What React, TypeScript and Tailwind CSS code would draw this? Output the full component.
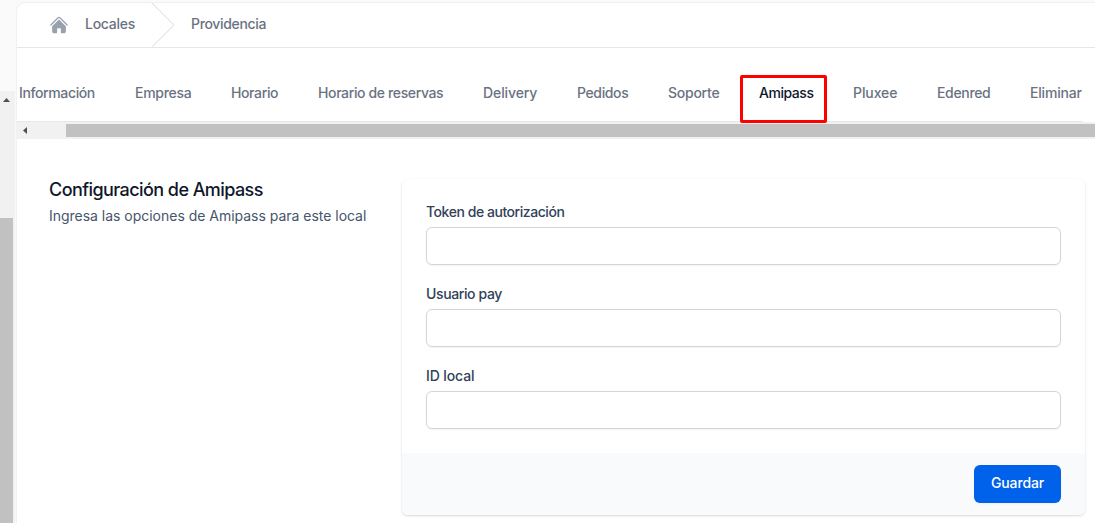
import { HTMLAttributes } from "react";

const tabs = [
  { label: "Información", box: "w-[76px] tracking-[-0.38px]" },
  { label: "Empresa", box: "w-[56px] tracking-[-0.3px]" },
  { label: "Horario", box: "w-[47px] tracking-[-0.38px]" },
  { label: "Horario de reservas", box: "w-[125px] tracking-[-0.37px]" },
  { label: "Delivery", box: "w-[54px] tracking-[-0.1px]" },
  { label: "Pedidos", box: "w-[51px] tracking-[-0.38px]" },
  { label: "Soporte", box: "w-[51px] tracking-[-0.25px]" },
  { label: "Amipass", box: "w-[54px] tracking-[-0.46px]", active: true },
  { label: "Pluxee", box: "w-[44px] tracking-[-0.1px]" },
  { label: "Edenred", box: "w-[53px] tracking-[-0.34px]" },
  { label: "Eliminar", box: "w-[51px] tracking-[-0.2px]" },
];

const fields = [
  { id: "token", label: "Token de autorización", tracking: "tracking-[-0.45px]" },
  { id: "user", label: "Usuario pay", tracking: "tracking-[-0.38px]" },
  { id: "local", label: "ID local", tracking: "tracking-[-0.12px]" },
];

function HomeIcon(props: HTMLAttributes<unknown>) {
  return (
    <svg className={props.className} viewBox="0 0 24 24" fill="currentColor" aria-hidden="true">
      <path d="M11.47 3.84a.75.75 0 011.06 0l8.69 8.69a.75.75 0 101.06-1.06l-8.689-8.69a2.25 2.25 0 00-3.182 0l-8.69 8.69a.75.75 0 001.061 1.06l8.69-8.69z" />
      <path d="M12 5.432l8.159 8.159c.03.03.06.058.091.086v6.198c0 1.035-.84 1.875-1.875 1.875H15a.75.75 0 01-.75-.75v-4.5a.75.75 0 00-.75-.75h-3a.75.75 0 00-.75.75V21a.75.75 0 01-.75.75H5.625a1.875 1.875 0 01-1.875-1.875v-6.198a2.29 2.29 0 00.091-.086L12 5.43z" />
    </svg>
  );
}

function Sidebar() {
  return (
    <div className="flex w-[17px] shrink-0 flex-col bg-[#fafafa] pt-[91px]">
      <div className="flex w-[15px] grow flex-col bg-[#f1f1f1]">
        <svg className="mt-[7px] ml-[3px] h-1 w-[7px]" viewBox="0 0 7 4" fill="#505050">
          <path d="M3.5 0L7 4H0z" />
        </svg>
        <div className="mt-[116px] w-[13px] grow bg-[#c1c1c1]" />
      </div>
    </div>
  );
}

export default function App() {
  return (
    <div className="flex h-[523px] w-full overflow-hidden bg-[#fafafa] font-['Inter',sans-serif] text-sm">
      <Sidebar />
      <main className="mt-[3px] flex min-w-0 grow flex-col rounded-tl-lg bg-white shadow-[0_0_2px_rgba(0,0,0,0.14)]">
        <nav className="flex h-[45px] shrink-0 items-center border-b border-gray-200 pl-8 font-medium text-gray-500">
          <HomeIcon className="size-5 shrink-0 text-gray-400" />
          <span className="ml-4 w-[66px] pb-0.5 tracking-[-0.25px]">Locales</span>
          <svg className="h-[44px] w-6 shrink-0" viewBox="0 0 24 44" fill="none" stroke="#e5e7eb">
            <path d="M1 0L23 22L1 44" strokeWidth="1.2" />
          </svg>
          <span className="ml-4 pb-0.5 tracking-[-0.34px]">Providencia</span>
        </nav>

        <div className="mt-[18px] flex h-[56px] w-[1066px] shrink-0 items-center gap-10 border-b border-gray-200 pb-0.5 pl-0.5 font-medium text-gray-500">
          {tabs.map((tab) => (
            <a
              key={tab.label}
              className={`relative shrink-0 whitespace-nowrap ${tab.box} ${tab.active ? "text-slate-900" : ""}`}
            >
              {tab.label}
              {tab.active && (
                <span className="absolute -top-2 -left-[19px] z-10 h-[48px] w-[87px] rounded-xs border-3 border-[#ff0000]" />
              )}
            </a>
          ))}
        </div>

        <div className="flex h-[17px] shrink-0 items-center bg-[#f1f1f1] pl-1.5">
          <svg className="h-[7px] w-1" viewBox="0 0 4 7" fill="#505050">
            <path d="M4 0V7L0 3.5z" />
          </svg>
          <div className="ml-[39px] h-[13px] grow bg-[#c1c1c1]" />
        </div>

        <section className="flex pt-10 pl-8">
          <div className="w-[353px] shrink-0">
            <h3 className="mt-px text-lg leading-5 font-medium tracking-[-0.57px] text-slate-900">
              Configuración de Amipass
            </h3>
            <p className="mt-1.5 leading-5 tracking-[-0.02px] whitespace-nowrap text-slate-600">
              Ingresa las opciones de Amipass para este local
            </p>
          </div>

          <form className="h-[336px] w-[683px] overflow-hidden rounded-md bg-white shadow-[0_1px_3px_rgba(0,0,0,0.1),0_1px_2px_rgba(0,0,0,0.06)]">
            <div className="flex h-[274px] flex-col gap-5 px-6 pt-[23px]">
              {fields.map((field) => (
                <div key={field.id} className="flex flex-col gap-[5px] pb-[-1px]">
                  <label htmlFor={field.id} className={`h-5 leading-5 font-medium text-slate-700 ${field.tracking}`}>
                    {field.label}
                  </label>
                  <input
                    id={field.id}
                    className="-mb-px h-[38px] w-full rounded-md border border-gray-300 bg-white px-3 shadow-[0_1px_2px_rgba(0,0,0,0.05)]"
                  />
                </div>
              ))}
            </div>
            <div className="flex h-[62px] items-center justify-end bg-slate-50 px-6">
              <button
                type="button"
                className="h-[38px] w-[87px] rounded-md bg-[#0062eb] pb-0.5 font-medium tracking-[-0.12px] text-white shadow-[0_1px_2px_rgba(0,0,0,0.05)]"
              >
                Guardar
              </button>
            </div>
          </form>
        </section>
      </main>
    </div>
  );
}
